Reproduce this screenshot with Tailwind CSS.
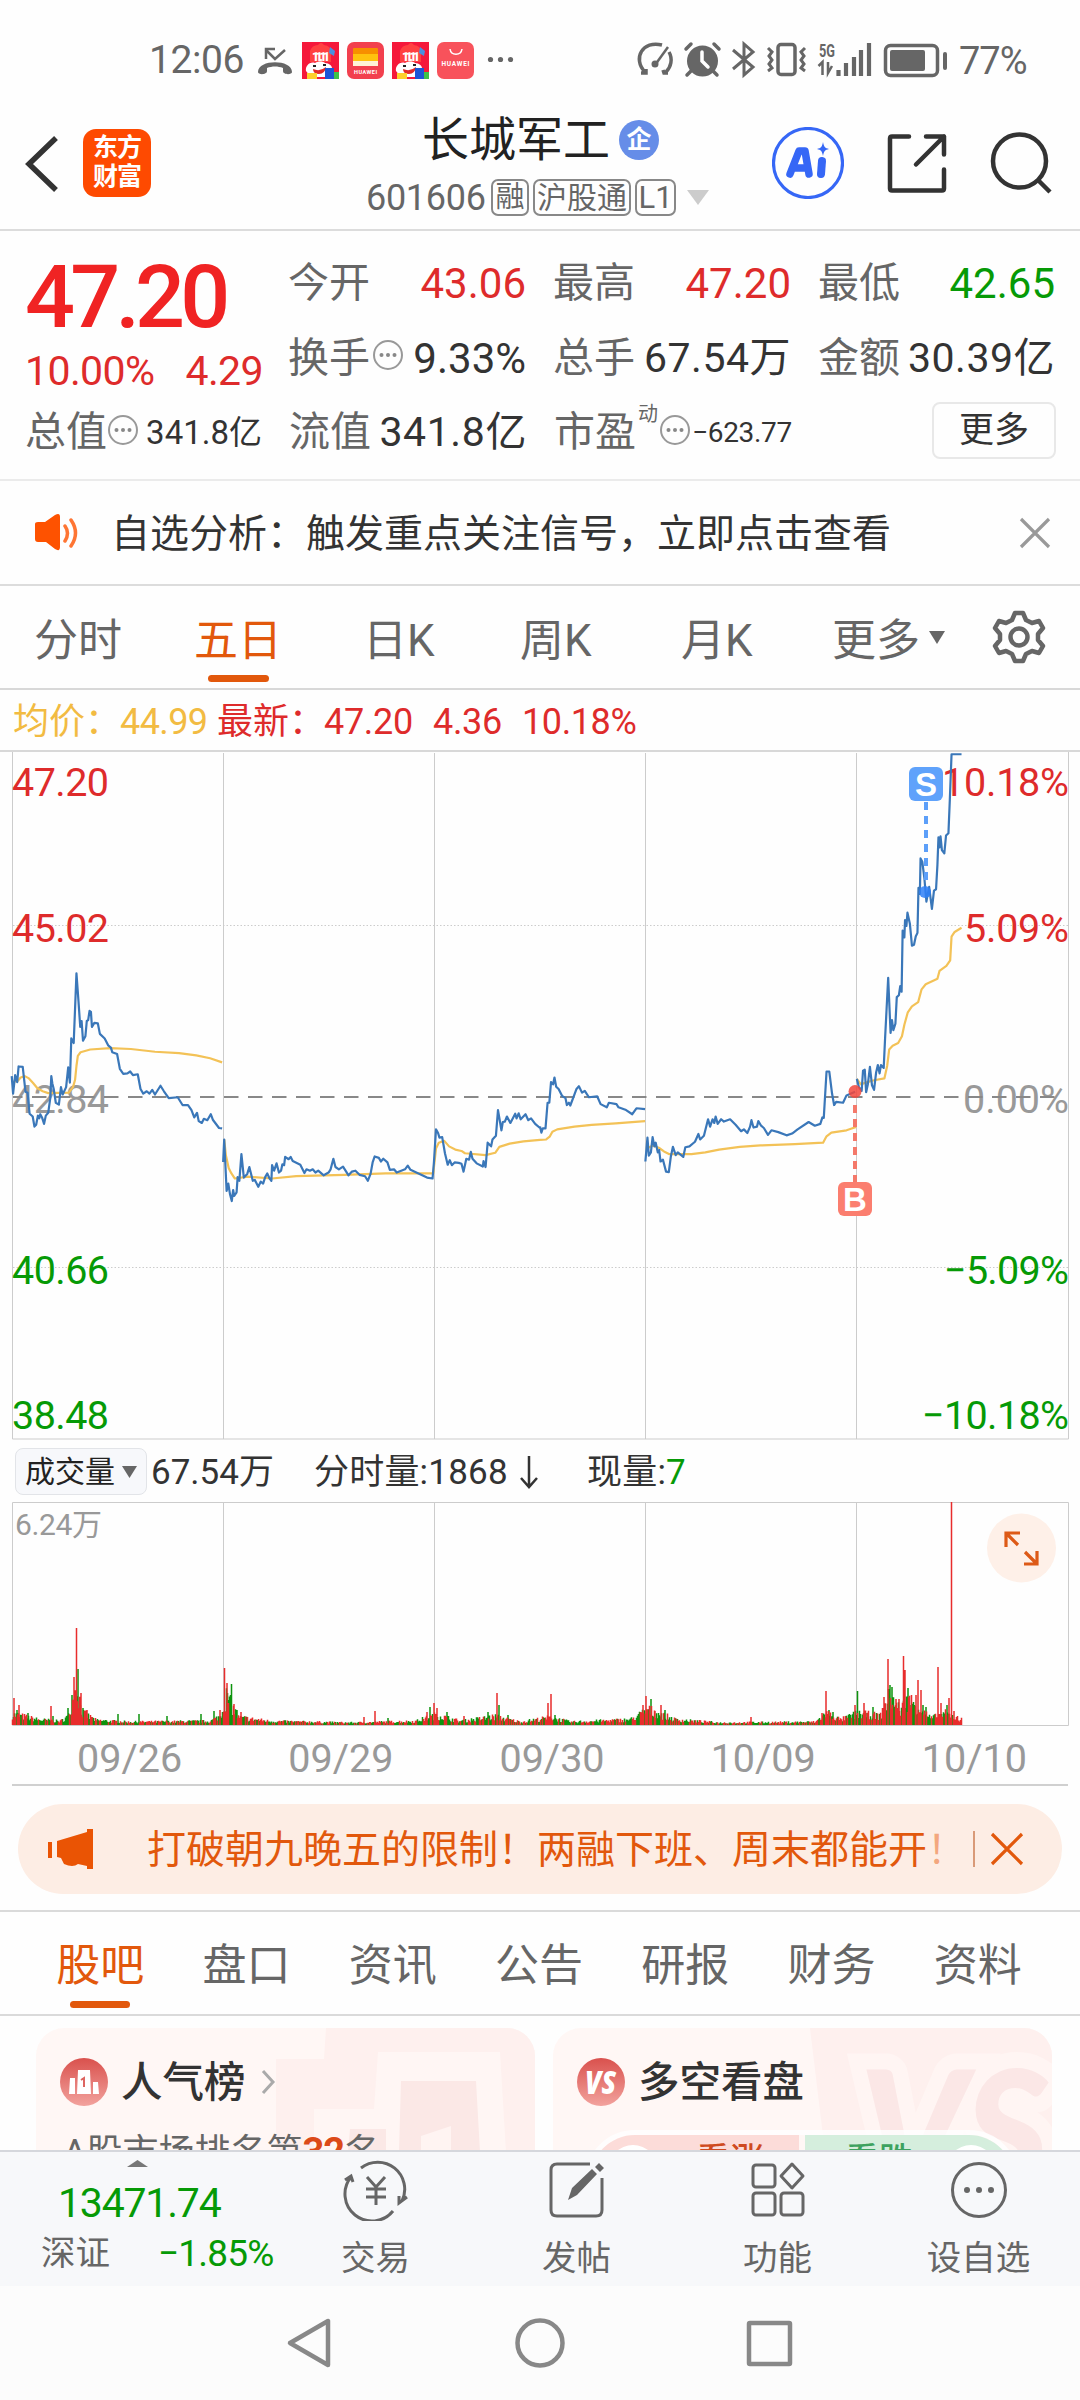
<!DOCTYPE html>
<html lang="zh-CN">
<head>
  <meta charset="UTF-8" />
  <meta name="viewport" content="width=device-width, initial-scale=1" />
  <title>长城军工 601606</title>
  <script src="https://cdn.jsdelivr.net/npm/@tailwindcss/browser@4"></script>
  <style>
    body {
      font-family: Roboto, "Noto Sans CJK SC", sans-serif;
    }
    .line {
      fill: none;
      stroke-width: 2.2;
      stroke-linejoin: round;
      vector-effect: non-scaling-stroke;
    }
  </style>
</head>
<body class="w-[1080px] h-[2400px] overflow-hidden bg-[#fefefe] text-[#333] leading-none whitespace-nowrap">

  <!-- Status bar -->
  <div class="h-[102px] pt-[19px] pl-[149px] pr-[54px] flex items-center text-[#666]">
    <span class="w-[108px] text-[39px] tracking-[-0.4px]">12:06</span>
    <svg class="-mt-[2px] w-[260px] h-[40px]" viewBox="257 39 260 40">
      <path d="M266 49l9 9 10-9M266 58v-10h9" fill="none" stroke="#666" stroke-width="2.5" />
      <path d="M258 71c0-13 34-13 34 0 0 3-9 3-9-1v-3c-5-2-11-2-16 0v3c0 4-9 4-9 1z" fill="#666" />
      <g id="promo">
        <rect x="302" y="41" width="37" height="37" fill="#f5183b" />
        <path d="M310 61V50q2-6 8-6 3-4 6 0 7 1 7 7v10z" fill="#ff4040" />
        <path d="M330 46l5 4-1 5-5-3z" fill="#4b8fe0" />
        <text x="312" y="60" font-size="12" font-weight="900" fill="#fff" textLength="18">11.11</text>
        <path d="M306 70c-1-5 4-10 9-8 3-2 8-2 10 0 4 0 8 3 7 7l-6 7h-15z" fill="#fff" />
        <path d="M313 68q7 3 13-2-1 7-7 7t-6-5z" fill="#e22a2a" />
        <path d="M313 65h3M323 64h3" stroke="#222" stroke-width="1.800" />
        <rect x="307" y="72" width="10" height="6" fill="#ffd02c" />
        <rect x="325" y="67" width="9" height="11" fill="#1d55d6" />
        <rect x="334" y="71" width="5" height="7" fill="#3cc24a" />
      </g>
      <rect x="347" y="41" width="37" height="37" rx="7" fill="#f2404e" />
      <rect x="353" y="47" width="25" height="7" rx="1" fill="#f78f00" />
      <rect x="353" y="53" width="25" height="7" fill="#ffc20e" />
      <rect x="353" y="60" width="25" height="5" fill="#fff3d6" />
      <text x="354" y="73" font-size="5.5" font-weight="700" fill="#fff" textLength="23">HUAWEI</text>
      <use href="#promo" x="90" />
      <rect x="437" y="41" width="37" height="37" rx="7" fill="#f8525b" />
      <path d="M450 48c1 7 11 7 12 0" fill="none" stroke="#fff" stroke-width="1.5" />
      <text x="441.500" y="65" font-size="6.500" font-weight="700" fill="#fff" textLength="28">HUAWEI</text>
      <circle cx="490.500" cy="58.500" r="2.600" fill="#666" /><circle cx="500.500" cy="58.500" r="2.600" fill="#666" /><circle cx="510.500" cy="58.500" r="2.600" fill="#666" />
    </svg>
    <svg class="ml-auto -mt-[2px] w-[315px] h-[40px]" viewBox="634 39 315 40" fill="none" stroke="#666" stroke-width="3.500">
      <!-- speed gauge -->
      <path d="M645 71c-13-14-2-32 17-27M641 72h5v-4M669 51c4 7 2 15-3 20M663 69l1 3h4" />
      <path d="M655 64l13-18" stroke-width="2.500" /><circle cx="655" cy="63" r="3.500" fill="#666" stroke="none" />
      <!-- alarm -->
      <circle cx="702.500" cy="60" r="15.500" fill="#666" stroke="none" />
      <path d="M702 51v9l6 6" stroke="#fff" stroke-width="3.500" stroke-linecap="round" />
      <path d="M686 48l5-5M714 43l5 5M691 70l-4 4M713 70l4 4" stroke-linecap="round" />
      <!-- bluetooth -->
      <path d="M733 49l20 17-9 8V43l9 8-20 17" stroke-width="3" />
      <!-- vibrate -->
      <rect x="778" y="43.500" width="17" height="30" rx="3" />
      <path d="M768 47l4 4-3 4 3 4-3 4 3 4-4 3M805 47l-4 4 3 4-3 4 3 4-3 4 4 3" stroke-width="3" />
      <!-- 5G signal -->
      <text x="819" y="56" font-size="18" font-weight="700" fill="#666" stroke="none" textLength="16" lengthAdjust="spacingAndGlyphs">5G</text>
      <path d="M818.500 65l4-4v13M832 65l-4 7V61" stroke-width="2.500" />
      <path d="M838.500 69v6M846 62v13M854 56v19M861 49v26M869 42v33" stroke-width="4.200" />
      <!-- battery -->
      <rect x="885.500" y="44.500" width="52" height="30" rx="5" />
      <rect x="890" y="49" width="35" height="21" rx="2" fill="#666" stroke="none" />
      <path d="M945 53v14" stroke-linecap="round" stroke-width="4" />
    </svg>
    <span class="ml-[10px] w-[67px] text-[38px] tracking-[-1px]">77%</span>
  </div>

  <!-- Title bar -->
  <div class="h-[129px] border-b-2 border-[#dcdcdc] flex">
    <div class="w-[362px] pt-[27px] pl-[25px] flex gap-[24px]">
      <svg class="w-[34px] h-[66px]" viewBox="0 0 34 66"><path d="M31 9L4 35l27 26" fill="none" stroke="#333" stroke-width="5.500" /></svg>
      <div class="w-[68px] h-[68px] rounded-[13px] bg-[#fe4a01] text-white text-[25px] leading-[29px] font-bold text-center pt-[4px] tracking-[-1px]">东方<br />财富</div>
    </div>
    <div class="w-[366px]">
      <div class="pt-[14px] pl-[60px] flex items-center gap-[9px]">
        <span class="text-[47px] text-[#222]">长城军工</span>
        <span class="w-[40px] h-[40px] rounded-full bg-[#668de8] text-white text-[25px] font-bold flex items-center justify-center">企</span>
      </div>
      <div class="mt-[16px] pl-[4px] flex items-center text-[#666]">
        <span class="w-[125px] text-[36px] tracking-[-0.3px]">601606</span>
        <span class="w-[38px] h-[37px] mr-[4px] border-2 border-[#888] rounded-[7px] text-[29px] flex items-center justify-center">融</span>
        <span class="w-[98px] h-[37px] mr-[4px] border-2 border-[#888] rounded-[7px] text-[30px] flex items-center justify-center">沪股通</span>
        <span class="w-[41px] h-[37px] mr-[11px] border-2 border-[#888] rounded-[7px] text-[31px] flex items-center justify-center">L1</span>
        <svg class="w-[22px] h-[15px]" viewBox="0 0 22 15"><path d="M0 0h22L11 15z" fill="#ccc" /></svg>
      </div>
    </div>
    <div class="pt-[25px] pl-[44px] flex">
      <svg class="w-[72px] h-[72px]" viewBox="0 0 72 72">
        <circle cx="36" cy="36" r="34.500" fill="none" stroke="#3667f6" stroke-width="3.200" />
        <path d="M18 47l9-23h6l4 23M23 41h12" fill="none" stroke="#3667f6" stroke-width="7.500" stroke-linejoin="round" stroke-linecap="round" />
        <path d="M50 34l-1 13" stroke="#3667f6" stroke-width="8" stroke-linecap="round" />
        <path d="M51 15c1 5 2 6 6 7-4 1-5 2-6 7-1-5-2-6-6-7 4-1 5-2 6-7z" fill="#3667f6" />
      </svg>
      <svg class="ml-[42px] w-[62px] h-[72px]" viewBox="886 127 62 72" fill="none" stroke="#333" stroke-width="4.500" stroke-linejoin="round" stroke-linecap="round">
        <path d="M909 136.500h-17q-2 0-2 2v50q0 2 2 2h50q2 0 2-2v-19M926 136.500h18v18M944 136.500l-28 28" />
      </svg>
      <svg class="ml-[42px] w-[64px] h-[72px]" viewBox="989 127 64 72" fill="none" stroke="#333" stroke-width="4.500">
        <circle cx="1018.500" cy="161" r="26.500" /><path d="M1037 180l12 12" />
      </svg>
    </div>
  </div>

  <!-- Quote panel -->
  <div class="h-[250px] border-b-2 border-[#ebebeb] pl-[25px] pr-[24px] text-[41px]">
    <div class="h-[151px] flex">
      <div class="w-[263px]">
        <div class="pt-[22px] h-[110px] text-[88px] font-medium text-[#f02323] tracking-[-4.800px]">47.20</div>
        <div class="pt-[10px] pr-[25px] flex justify-between text-[41px] tracking-[-0.6px] text-[#de2b2b]"><span>10.00%</span><span>4.29</span></div>
      </div>
      <div class="pt-[32px] grid grid-cols-[238px_238px_237px] auto-rows-[41px] gap-x-[27px] gap-y-[34px]">
        <div class="flex justify-between"><span class="text-[#666]">今开</span><span class="text-[42px] text-[#de2b2b]">43.06</span></div>
        <div class="flex justify-between"><span class="text-[#666]">最高</span><span class="text-[42px] text-[#de2b2b]">47.20</span></div>
        <div class="flex justify-between"><span class="text-[#666]">最低</span><span class="text-[42px] text-[#069a06]">42.65</span></div>
        <div class="flex justify-between">
          <span class="text-[#666] flex">换手<svg class="ml-[2px] w-[32px] h-[34px]" viewBox="0 0 32 34"><g id="more-dot"><circle cx="16" cy="17" r="14" fill="none" stroke="#999" stroke-width="2" /><circle cx="9.500" cy="17" r="2" fill="#888" /><circle cx="16" cy="17" r="2" fill="#888" /><circle cx="22.500" cy="17" r="2" fill="#888" /></g></svg></span>
          <span class="text-[42px]">9.33%</span>
        </div>
        <div class="flex justify-between"><span class="text-[#666]">总手</span><span class="tracking-[0.5px]">67.54万</span></div>
        <div class="flex justify-between"><span class="text-[#666]">金额</span><span class="tracking-[0.5px]">30.39亿</span></div>
      </div>
    </div>
    <div class="mt-[30px] h-[41px] flex items-center">
      <div class="w-[237px] mr-[27px] flex items-center justify-between"><span class="text-[#666] flex">总值<svg class="w-[32px] h-[36px]" viewBox="0 0 32 34"><use href="#more-dot" /></svg></span><span class="text-[33px]">341.8亿</span></div>
      <div class="w-[238px] mr-[27px] flex items-center justify-between"><span class="text-[#666]">流值</span><span class="tracking-[0.6px]">341.8亿</span></div>
      <div class="w-[238px] flex items-center text-[#666]">市盈<span class="ml-[2px] -mt-[38px] text-[20px]">动</span><svg class="ml-[1px] -mt-[5px] w-[32px] h-[38px]" viewBox="0 0 32 34"><use href="#more-dot" /></svg><span class="ml-auto text-[28px] tracking-[-0.3px] text-[#333]">−623.77</span></div>
      <div class="ml-auto -my-2 -mt-[12px] w-[124px] h-[57px] border-2 border-[#e8e8e8] rounded-[8px] text-[35px] flex items-center justify-center">更多</div>
    </div>
  </div>

  <!-- Signal notice -->
  <div class="h-[105px] border-b-2 border-[#dcdcdc] pl-[34px] pr-[28px] flex items-center">
    <svg class="w-[46px] h-[40px]" viewBox="0 0 46 40">
      <path d="M1 11q0-2 3-2h7l10-7q5-3 5 2v30q0 5-5 2l-9-7H4q-3 0-3-3z" fill="#fe5200" />
      <path d="M31 13q5 7 0 15M37 7q9 13 0 26" fill="none" stroke="#fe5200" stroke-width="3.500" stroke-linecap="round" opacity=".8" />
    </svg>
    <span class="ml-[31px] pt-[3px] text-[39px]">自选分析：触发重点关注信号，立即点击查看</span>
    <svg class="ml-auto w-[34px] h-[34px]" viewBox="0 0 34 34"><path d="M3 3l28 28M31 3L3 31" stroke="#999" stroke-width="3.200" /></svg>
  </div>

  <!-- Chart period tabs -->
  <div class="h-[104px] border-b-2 border-[#d8d8d8] pl-[34px] flex text-[44px] text-[#666]">
    <div class="w-[160px] pt-[33px]">分时</div>
    <div class="w-[169px] pt-[33px] text-[#e2580c]">五日<div class="ml-[14px] mt-[12px] w-[61px] h-[7px] rounded-full bg-[#e2580c]"></div></div>
    <div class="w-[157px] pt-[33px]">日K</div>
    <div class="w-[161px] pt-[33px]">周K</div>
    <div class="w-[151px] pt-[33px]">月K</div>
    <div class="w-[159px] pt-[33px] flex">更多<svg class="ml-[9px] mt-[12px] w-[16px] h-[13px]" viewBox="0 0 16 13"><path d="M0 0h16L8 13z" fill="#666" /></svg></div>
    <svg class="mt-[23px] w-[56px] h-[56px]" viewBox="-28 -28 56 56" fill="none" stroke="#666" stroke-width="4.500" stroke-linejoin="round">
      <path d="M-4-24H4L7-17 13-14 20-16 24-9 19-3V3L24 9 20 16 13 14 7 17 4 24H-4L-7 17-13 14-20 16-24 9-19 3V-3L-24-9-20-16-13-14-7-17z" />
      <circle r="8.500" />
    </svg>
  </div>

  <!-- Average and latest price -->
  <div class="h-[62px] pt-[4px] border-b-2 border-[#d8d8d8] pl-[13px] flex items-center text-[36px] text-[#de2b2b]">
    <span class="w-[107px] text-[#f2bb42]">均价：</span>
    <span class="w-[97px] text-[#f2bb42] tracking-[-0.6px]">44.99</span>
    <span class="w-[107px]">最新：</span>
    <span class="w-[109px] tracking-[-0.3px]">47.20</span>
    <span class="w-[89px] tracking-[-0.3px]">4.36</span>
    <span class="tracking-[-0.4px]">10.18%</span>
  </div>

  <!-- Five day price chart -->
  <svg class="block w-[1080px] h-[688px]" viewBox="0 752 1080 688" font-size="39.500">
    <path d="M12.500 752V1439H1068.500V752M223.500 753V1439M434.500 753V1439M645.500 753V1439M856.500 753V1439" fill="none" stroke="#ccc" />
    <path d="M13 925.500H1068M13 1267.500H1068" stroke="#ccc" stroke-dasharray="1.500 2" />
    <g fill="#de2b2b">
      <text x="12" y="796" textLength="97">47.20</text><text x="12" y="942" textLength="97">45.02</text>
      <text x="1069" y="796" text-anchor="end" textLength="127">10.18%</text><text x="1069" y="942" text-anchor="end" textLength="105">5.09%</text>
    </g>
    <g fill="#999">
      <text x="12" y="1113" textLength="97">42.84</text><text x="1069" y="1113" text-anchor="end" textLength="106">0.00%</text>
    </g>
    <g fill="#069a06">
      <text x="12" y="1284" textLength="97">40.66</text><text x="12" y="1429" textLength="97">38.48</text>
      <text x="1069" y="1284" text-anchor="end" textLength="125">−5.09%</text><text x="1069" y="1429" text-anchor="end" textLength="147">−10.18%</text>
    </g>
    <path d="M13 1097H1064" stroke="#888" stroke-width="2" stroke-dasharray="14.500 9.500" stroke-dashoffset="5" />

    <!-- 09/26 to 09/30 morning -->
    <g transform="translate(0 740) scale(.34439 .45917)">
      <g stroke="#f3c257">
        <path class="line" d="M36 745L52 742 60 735 72 732 84 737 96 747 108 758 124 765 140 769 200 768 212 756 218 740 222 710 226 688 234 680 262 674 320 671 380 673 450 679 520 682 570 687 610 693 645 702" />
        <path class="line" d="M651 870L656 905 664 932 672 944 682 955 720 951 790 955 860 950 1000 947 1120 944 1258 944 1266 890 1274 877 1290 873 1304 885 1322 892 1340 895 1350 900 1410 904 1438 899 1450 886 1480 879 1520 874 1568 871" />
      </g>
      <g stroke="#3a77b9">
        <path class="line" d="M34 732L38 770 44 730 50 745 54 711 66 712 74 766 80 768 86 814 95 820 100 842 105 838 110 818 114 824 117 815 122 822 128 836 133 818 140 812 146 780 149 732 152 748 156 760 162 790 171 794 177 756 182 772 192 756 198 713 203 746 207 650 214 660 222 508 228 570 233 625 237 612 241 655 248 645 252 612 256 610 260 590 264 592 267 625 274 616 284 617 290 640 304 650 314 665 322 670 326 680 340 684 348 716 358 727 370 726 378 722 386 730 400 728 408 760 416 770 426 765 434 770 442 762 450 772 466 753 476 765 490 780 516 778 530 795 546 795 556 806 564 822 572 812 577 830 586 834 592 825 602 828 612 815 618 827 636 845 645 846" />
        <path class="line" d="M648 919L651 870 658 982 663 966 668 990 673 1004 677 980 680 993 687 985 690 952 695 960 701 902 708 953 718 945 724 930 734 960 740 958 750 973 757 962 764 966 770 952 776 944 782 954 788 960 790 926 796 938 803 922 810 942 816 938 820 924 825 926 828 908 838 913 844 908 850 917 872 925 884 943 890 935 900 938 908 935 916 942 924 938 940 948 954 942 960 935 968 912 974 930 984 935 996 929 1012 948 1022 940 1032 938 1044 947 1060 950 1068 960 1076 945 1082 920 1088 907 1100 910 1106 918 1113 912 1125 920 1132 936 1144 935 1152 942 1176 935 1184 927 1192 936 1212 943 1240 953 1256 955 1260 920 1266 848 1272 856 1276 866 1284 865 1292 900 1300 925 1306 915 1312 926 1320 920 1332 921 1340 923 1346 940 1354 912 1362 914 1367 897 1372 912 1384 922 1402 929 1404 917 1410 930 1416 877 1426 885 1430 870 1440 862 1446 806 1456 850 1460 832 1466 831 1472 820 1482 834 1496 814 1500 824 1506 813 1512 826 1526 815 1534 828 1542 824 1554 836 1568 845" />
      </g>
    </g>
    <!-- 09/30 afternoon to 10/10 -->
    <g transform="translate(540 740) scale(.34439 .45917)">
      <g stroke="#f3c257">
        <path class="line" d="M0 871L18 870 28 864 36 853 50 848 100 842 150 838 220 835 305 830" />
        <path class="line" d="M308 890L328 883 345 888 360 896 376 902 440 902 480 898 520 892 580 886 640 883 740 880 822 877 832 863 846 855 890 850 918 843" />
        <path class="line" d="M920 738L932 750 950 745 970 741 1000 737 1008 710 1014 674 1024 666 1040 660 1051 645 1058 620 1068 593 1080 580 1098 571 1108 543 1120 532 1154 520 1160 503 1180 492 1191 480 1195 428 1204 418 1224 409" />
      </g>
      <g stroke="#3a77b9">
        <path class="line" d="M0 842L4 855 8 846 16 846 22 790 27 790 32 745 38 750 42 735 47 755 54 760 64 775 74 780 78 795 84 790 88 796 98 776 106 760 113 754 122 768 130 764 142 778 166 776 176 793 194 800 200 790 222 793 228 800 250 806 268 815 280 802 305 804" />
        <path class="line" d="M306 918L312 866 316 905 322 898 327 865 332 885 336 877 342 898 346 893 350 918 357 914 366 940 374 941 380 907 386 886 394 904 400 898 416 908 422 887 434 885 450 875 460 858 465 870 476 862 488 826 494 842 501 826 506 834 510 820 516 836 526 826 534 831 552 826 568 838 584 852 592 848 602 856 610 842 614 828 620 844 630 842 634 830 642 840 650 845 662 860 672 850 692 854 716 861 732 857 748 848 780 832 798 840 814 836 820 822 824 823 832 722 840 722 848 770 854 795 860 788 880 790 890 774 915 766" />
        <path class="line" d="M920 738L926 756 934 764 938 720 943 718 947 767 952 750 958 712 964 752 970 762 976 724 981 708 986 726 990 708 998 714 1002 650 1011 518 1018 638 1022 610 1026 632 1032 618 1036 560 1042 556 1046 536 1050 548 1053 415 1058 430 1060 392 1064 405 1067 376 1074 400 1080 448 1086 446 1091 428 1096 420 1099 322 1103 335 1105 258 1110 265 1116 300 1122 352 1130 320 1138 368 1144 328 1150 325 1154 272 1157 212 1160 234 1163 210 1167 240 1174 247 1179 208 1186 203 1190 130 1195 31 1224 31" />
      </g>
    </g>

    <!-- sell / buy marks -->
    <path d="M926 802V882" stroke="#5c9ff9" stroke-width="4" stroke-dasharray="8 6" />
    <circle cx="925" cy="892" r="6" fill="#2f80f7" opacity=".85" />
    <rect x="909" y="767" width="34" height="34" rx="6" fill="#5fa2fb" />
    <text x="926" y="796" font-size="33" font-weight="700" font-family="Liberation Sans" fill="#fff" text-anchor="middle">S</text>
    <path d="M855 1105V1182" stroke="#f4796a" stroke-width="4" stroke-dasharray="8 6" />
    <circle cx="855" cy="1091.500" r="6.500" fill="#f2473c" opacity=".85" />
    <rect x="838" y="1182" width="34" height="34" rx="6" fill="#fb7e6f" />
    <text x="855" y="1211" font-size="33" font-weight="700" font-family="Liberation Sans" fill="#fff" text-anchor="middle">B</text>
  </svg>

  <!-- Volume legend -->
  <div class="h-[62px] pt-[1px] pl-[15px] flex items-center text-[35px]">
    <div class="w-[132px] h-[47px] mr-[4px] pl-[9px] border border-[#e2e4e8] rounded-[8px] bg-[#f7f8fb] text-[30px] flex items-center text-[#222]">成交量<svg class="ml-[7px] w-[15px] h-[12px]" viewBox="0 0 15 12"><path d="M0 0h15L7.500 12z" fill="#666" /></svg></div>
    <span class="w-[163px] pt-[2px]">67.54万</span>
    <span class="w-[205px] pt-[2px] tracking-[0.2px]">分时量:1868</span>
    <svg class="w-[20px] h-[34px]" viewBox="0 0 20 34"><path d="M10 1v30M2 23l8 9 8-9" fill="none" stroke="#333" stroke-width="2.500" /></svg>
    <span class="ml-[48px] pt-[2px] tracking-[0.2px]">现量:<span class="text-[#069a06]">7</span></span>
  </div>

  <!-- Volume chart -->
  <svg class="block w-[1080px] h-[224px]" viewBox="0 1502 1080 224">
    <path d="M12.500 1502.500H1068.500V1725.500H12.500zM223.500 1503V1725M434.500 1503V1725M645.500 1503V1725M856.500 1503V1725" fill="none" stroke="#ccc" />
    <text x="15" y="1535" font-size="30" fill="#999" textLength="87">6.24万</text>
    <path id="volGreen" stroke="#0d930d" stroke-width="1.500" fill="none" />
    <path id="volRed" stroke="#e82c2c" stroke-width="1.500" fill="none" />
    <circle cx="1021.500" cy="1548" r="34.500" fill="#fef0e8" />
    <path d="M1006 1547v-14h14M1006 1533l12 12M1024 1564h13v-13M1037 1564l-12-12" fill="none" stroke="#dd5a17" stroke-width="3.200" />
  </svg>

  <div class="h-[60px] mx-[12px] border-b-2 border-[#d0d0d0] pt-[13px] grid grid-cols-5 text-center text-[39.500px] text-[#999]">
    <span class="pl-[24px]">09/26</span><span class="pl-[24px]">09/29</span><span class="pl-[24px]">09/30</span><span class="pl-[24px]">10/09</span><span class="pl-[24px]">10/10</span>
  </div>

  <!-- Promo banner -->
  <div class="h-[126px] border-b-2 border-[#dadada] px-[18px] pt-[18px]">
    <div class="h-[90px] rounded-full bg-[#fdede4] pl-[29px] flex items-center text-[#e2580c]">
      <svg class="w-[48px] h-[42px]" viewBox="0 0 48 42" fill="#ea5404"><path d="M1 14h4v16H1zM10 13l30-9V1h6v40h-6v-3l-9-2q-5 4-14 0l-3-6-4-1z" /></svg>
      <span class="ml-[52px] pt-[2px] w-[822px] text-[39px]">打破朝九晚五的限制！两融下班、周末都能开<span class="text-[#f3a77e]">！</span></span>
      <span class="ml-[4px] w-[2px] h-[36px] bg-[#d99a78]"></span>
      <svg class="ml-[15px] w-[34px] h-[34px]" viewBox="0 0 34 34"><path d="M2 2l30 30M32 2L2 32" stroke="#e2580c" stroke-width="3.200" /></svg>
    </div>
  </div>

  <!-- Section tabs -->
  <div class="h-[104px] border-b-2 border-[#dadada] pl-[27px] pr-[29px] pt-[32px] grid grid-cols-7 text-center text-[44px] text-[#666]">
    <div class="text-[#e2580c]">股吧<div class="mx-auto mt-[13px] w-[60px] h-[7px] rounded-full bg-[#e2580c]"></div></div>
    <div>盘口</div><div>资讯</div><div>公告</div><div>研报</div><div>财务</div><div>资料</div>
  </div>

  <!-- Cards, cut off by the bottom bar -->
  <div class="h-[134px] overflow-hidden pl-[36px] pr-[28px] pt-[12px] flex gap-[18px]">
    <div class="relative w-[499px] h-[260px] shrink-0 rounded-[28px] overflow-hidden bg-[#fff7f5]">
      <svg class="absolute right-0 top-0 w-[260px] h-[124px]" viewBox="239 0 260 124">
        <path d="M290 0H500V124H240V31H288z" fill="#fef0ee" />
        <path d="M342 24H464L470 124H278V81H338z" fill="#fff6f4" />
        <path d="M365 53H440L444 124H363zM314 101H350V124H312z" fill="#fbe8e6" />
        <path d="M385 108l30-10v26h-30z" fill="#fff4f2" />
      </svg>
      <div class="relative pt-[30px] pl-[24px] flex items-center">
        <svg class="w-[48px] h-[48px]" viewBox="0 0 48 48">
          <defs><linearGradient id="badge" x1="0" y1="0" x2="0" y2="1"><stop offset="0" stop-color="#d9514d" /><stop offset="1" stop-color="#f2a29d" /></linearGradient></defs>
          <circle cx="24" cy="24" r="24" fill="url(#badge)" />
          <path d="M10 20h5v16H9zM18 12h12l1 24H17zM33 24h5l1 12h-6z" fill="#fff" />
          <path d="M21 22l3-2v9" fill="none" stroke="#dd6561" stroke-width="2" />
        </svg>
        <span class="ml-[13px] pt-[2px] text-[41.500px] font-medium">人气榜</span>
        <svg class="ml-[15px] w-[15px] h-[26px]" viewBox="0 0 15 26"><path d="M2 2l10 11L2 24" fill="none" stroke="#aaa" stroke-width="3" /></svg>
      </div>
      <div class="relative mt-[27px] pl-[27px] text-[36px] text-[#666]">A股市场排名第<b class="text-[38px] text-[#dc4a18] tracking-[-1px]">32</b>名</div>
    </div>
    <div class="relative w-[499px] h-[260px] shrink-0 rounded-[28px] overflow-hidden bg-[#fff7f5]">
      <svg class="absolute right-0 top-0 w-[250px] h-[124px]" viewBox="249 0 250 124">
        <path d="M257 0H499V124H272z" fill="#fef0ee" />
        <text x="306" y="166" font-size="172" font-weight="900" font-style="italic" font-family="Lato" fill="#fbe7e6" stroke="#fff5f3" stroke-width="32" paint-order="stroke" textLength="190" lengthAdjust="spacingAndGlyphs">VS</text>
      </svg>
      <div class="relative pt-[30px] pl-[24px] flex items-center">
        <svg class="w-[48px] h-[48px]" viewBox="0 0 48 48">
          <circle cx="24" cy="24" r="24" fill="url(#badge)" />
          <text x="8" y="36" font-size="32" font-weight="900" font-style="italic" font-family="Open Sans" fill="#fff" textLength="31" lengthAdjust="spacingAndGlyphs">VS</text>
        </svg>
        <span class="ml-[13px] pt-[2px] text-[41.500px] font-medium">多空看盘</span>
      </div>
      <div class="absolute left-[32px] top-[102px] w-[434px] h-[100px] rounded-full border-[5px] border-white/80 overflow-hidden flex gap-[6px] text-[34px] font-medium">
        <div class="relative w-[209px] bg-[#fcdcd9] pt-[8px] pl-[106px] text-[#cf4a20]">看涨<span class="absolute left-[18px] top-[10px] w-[50px] h-[50px] rounded-full bg-white"></span></div>
        <div class="relative w-[209px] bg-[#d5eedd] pt-[8px] pl-[40px] text-[#3da25f]">看跌<span class="absolute right-[18px] top-[10px] w-[50px] h-[50px] rounded-full bg-white"></span></div>
      </div>
    </div>
  </div>

  <!-- Bottom bar -->
  <div class="h-[136px] border-t-2 border-[#d5d7dc] bg-[#f7f8fa] flex text-[34.500px] text-[#666]">
    <div class="w-[275px] text-[#069a06]">
      <svg class="ml-[127px] mt-[8px] w-[21px] h-[7px]" viewBox="0 0 21 7"><path d="M0 7h21L10.500 0z" fill="#777" /></svg>
      <div class="mt-[16px] pl-[58px] text-[41px] tracking-[-1.200px]">13471.74</div>
      <div class="mt-[11px] pl-[41px] flex items-center"><span class="text-[#666]">深证</span><span class="ml-[48px] text-[37px] tracking-[-0.8px]">−1.85%</span></div>
    </div>
    <div class="w-[201px] pt-[7px] flex flex-col items-center">
      <svg class="w-[66px] h-[62px]" viewBox="-33 -31 66 62" fill="none" stroke="#666" stroke-width="3">
        <path d="M-15-22A27 27 0 0 1 26 11M17 21A27 27 0 0 1-25-13M-31-10l6-4 2 6M23 6v7l8-6" />
        <path d="M-9-13L0-3 9-13M0-3V15M-10-1H10M-10 7H10" />
      </svg>
      <span class="mt-[20px]">交易</span>
    </div>
    <div class="w-[201px] pt-[7px] flex flex-col items-center">
      <svg class="w-[60px] h-[62px]" viewBox="-30 -31 60 62" fill="none" stroke="#666" stroke-width="3">
        <path d="M13-26H-20Q-26-26-26-20V20Q-26 26-20 26H19Q25 26 25 20V-12" />
        <path d="M-9 10L-5-2 15-21l5 5L0 5z M18-23l4-4 5 5-4 4z" fill="#666" stroke="none" />
      </svg>
      <span class="mt-[20px]">发帖</span>
    </div>
    <div class="w-[201px] pt-[7px] flex flex-col items-center">
      <svg class="w-[60px] h-[62px]" viewBox="-30 -31 60 62" fill="none" stroke="#666" stroke-width="3" stroke-linejoin="round">
        <rect x="-25" y="-25" width="22" height="22" rx="3" /><rect x="-25" y="3" width="22" height="22" rx="3" /><rect x="3" y="3" width="22" height="22" rx="3" />
        <path d="M14-26l11 12-11 12L3-14z" />
      </svg>
      <span class="mt-[20px]">功能</span>
    </div>
    <div class="w-[201px] pt-[7px] flex flex-col items-center">
      <svg class="w-[60px] h-[62px]" viewBox="-30 -31 60 62">
        <circle r="26.500" fill="none" stroke="#666" stroke-width="3" />
        <circle cx="-12" r="3" fill="#666" /><circle r="3" fill="#666" /><circle cx="12" r="3" fill="#666" />
      </svg>
      <span class="mt-[20px]">设自选</span>
    </div>
  </div>

  <!-- System navigation -->
  <div class="h-[114px] bg-[#fcfcfc]">
    <svg class="w-[1080px] h-[114px]" viewBox="0 2286 1080 114" fill="none" stroke="#888" stroke-width="4.500" stroke-linejoin="round">
      <path d="M328 2321V2365L290 2343z" /><circle cx="540" cy="2343" r="22.500" /><rect x="749" y="2323" width="41" height="41" rx="1" />
    </svg>
  </div>

  <script>
    // volume peaks: [x, height, is up]
    const peaks = [
      [14, 27, 1], [17, 15, 0], [19, 20, 1], [28, 12, 0], [51, 19, 1], [53, 9, 0], [68, 17, 0], [72, 30, 0], [74, 48, 1], [76.500, 97, 1], [78, 56, 0], [81, 32, 1], [83, 17, 0], [87, 15, 1], [92, 8, 1],
      [118, 11, 0], [139, 11, 0], [167, 9, 0], [201, 11, 0], [214, 14, 0], [220, 15, 1], [224.500, 57, 1], [227, 42, 1], [229, 25, 0], [231.500, 41, 0], [234, 21, 1], [237, 15, 0], [241, 13, 1],
      [364, 8, 1], [375, 14, 1], [388, 7, 0], [427, 13, 1], [430, 18, 0], [434, 22, 1], [437, 17, 1], [447, 13, 0], [464, 9, 1], [488, 13, 0], [497, 32, 1], [499, 20, 0], [508, 10, 0],
      [548, 22, 1], [551, 31, 1], [555, 10, 0], [643, 20, 1], [646, 29, 1], [651, 26, 0], [655, 14, 1], [661, 20, 1], [665, 15, 0], [751, 8, 1], [822, 12, 1], [826, 34, 1], [829, 15, 0], [833, 13, 0],
      [855, 20, 1], [857.500, 34, 0], [864, 22, 1], [867, 12, 0], [873, 18, 0], [884, 28, 1], [888, 66, 1], [890, 40, 0], [892, 38, 0], [896, 26, 1], [899, 26, 1], [903.500, 69, 1], [905, 55, 1], [908, 37, 0], [911, 20, 0], [916, 30, 1], [918, 45, 1], [921, 35, 1], [923, 20, 0], [926, 18, 0],
      [938, 58, 1], [941, 22, 1], [947, 20, 0], [949, 27, 1], [951.500, 224, 1], [954, 14, 1]
    ];
    // typical level around each part of the session
    const base = [[12, 14], [24, 11], [38, 7], [60, 5], [68, 12], [76, 50], [82, 16], [96, 6], [130, 4], [210, 5], [220, 12], [226, 38], [238, 10], [270, 5], [350, 3], [415, 5], [436, 13], [460, 5], [495, 11], [520, 4], [550, 10], [570, 4], [630, 7], [648, 20], [675, 7], [720, 3], [815, 4], [826, 16], [840, 7], [857, 15], [880, 12], [889, 38], [900, 20], [908, 34], [920, 22], [930, 9], [945, 15], [957, 9], [962, 7]];
    let seed = 7;
    const rnd = () => (seed = (seed * 16807) % 2147483647) / 2147483647;
    let red = '', green = '';
    function bar(x, h, up) {
      const d = `M${x} 1725v${-h}`;
      if (up) red += d; else green += d;
    }
    for (let i = 0; i < base.length - 1; i++) {
      const [x0, h0] = base[i], [x1, h1] = base[i + 1];
      for (let x = x0; x < x1; x += 1) {
        const h = h0 + (h1 - h0) * (x - x0) / (x1 - x0);
        bar(x + 0.5, Math.max(1.5, h * (0.4 + rnd() * 0.65)), x > 953 || rnd() > 0.55);
      }
    }
    peaks.forEach(p => bar(...p));
    document.getElementById('volRed').setAttribute('d', red);
    document.getElementById('volGreen').setAttribute('d', green);
  </script>
</body>
</html>
